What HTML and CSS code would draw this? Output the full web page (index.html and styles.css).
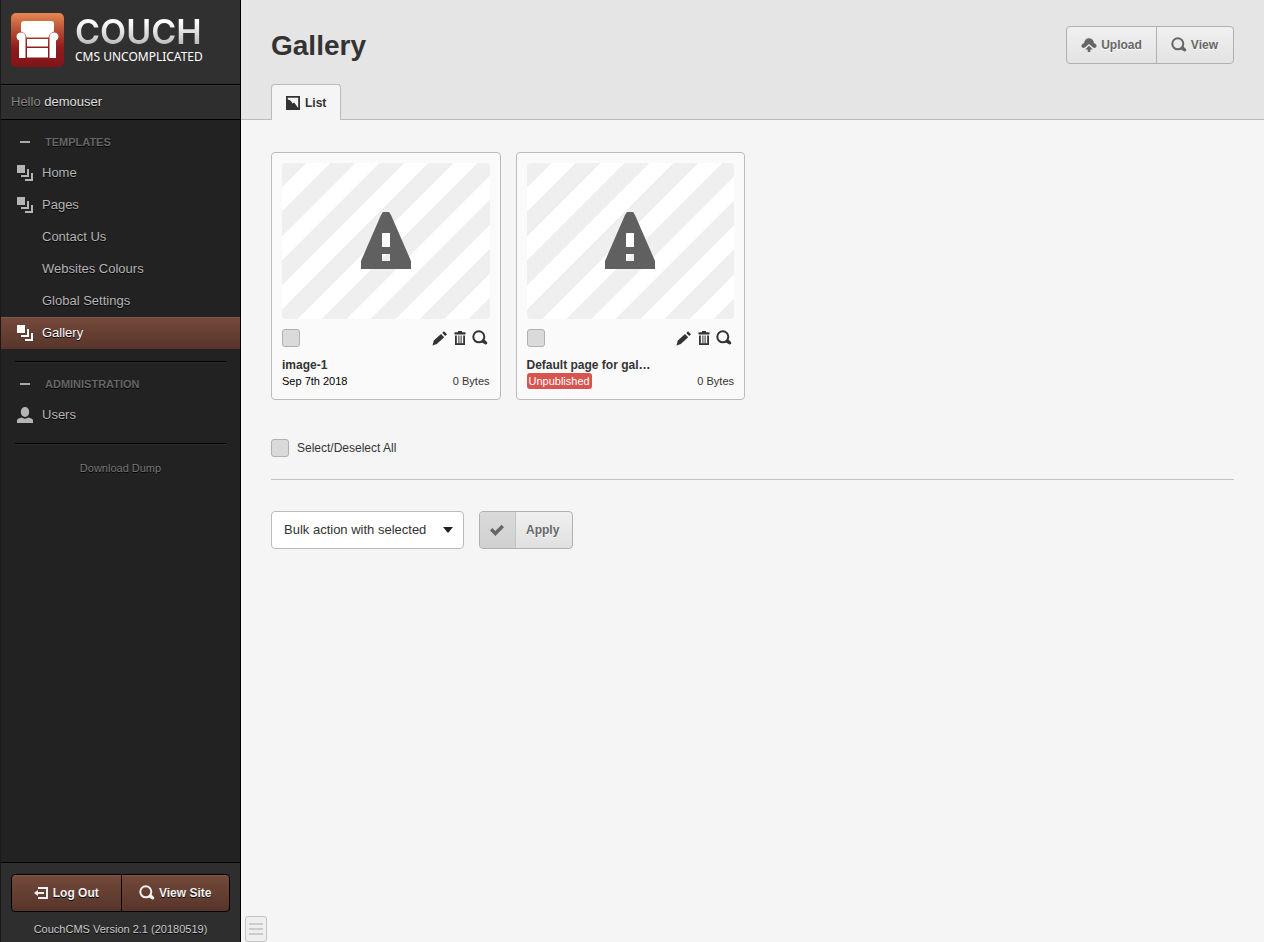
FILE: index.html
```html
<!DOCTYPE html>
<html lang="en">
<head>
<meta charset="utf-8">
<title>Gallery - CouchCMS</title>
<meta name="viewport" content="width=device-width, initial-scale=1">
<link rel="stylesheet" href="styles.css">
</head>
<body>
<svg class="defs" aria-hidden="true">
  <symbol id="stack" viewBox="0 0 16 16"><path d="M0 0h8v8H0zM10 4h2v8H4v-2h6zM14 8h2v8H8v-2h6z"/></symbol>
  <symbol id="search" viewBox="0 0 16 16"><circle cx="6.800" cy="6.800" r="5.500" fill="none" stroke="currentColor" stroke-width="2"/><path d="M9 12l3-3 2.700 2.700c.9.9.7 1.700.2 2.200s-1.400.8-2.300 0z"/></symbol>
  <symbol id="pencil" viewBox="0 0 16 16"><path d="M.5 15.500l1.300-5L9 4l3.200 3.200-7.400 6.900zM10.300 2.900L12 1.200l3 3-1.800 1.700z"/></symbol>
  <symbol id="trash" viewBox="0 0 14 16"><path d="M5 1h4v1.200h3.500V4.500h-11V2.200H5zM2 5.500h1.800v7.700h1.600V5.500h1v7.700h1.200V5.500h1v7.700h1.600V5.500H12V15H2z"/></symbol>
  <symbol id="user" viewBox="0 0 16 16"><ellipse cx="8" cy="5" rx="4.200" ry="5"/><path d="M0 16v-2.700c.3-1.700 2.500-2.300 4.800-2.800 1.600 1.500 4.800 1.500 6.400 0 2.300.5 4.500 1.100 4.800 2.800V16z"/></symbol>
</svg>
<div class="app">
  <aside class="sidebar">
    <a class="brand" href="#">
      <svg class="brand-mark" viewBox="0 0 53 54" aria-hidden="true">
        <defs><linearGradient id="mark" x1="0" y1="0" x2="0" y2="1"><stop offset="0" stop-color="#e58a51"/><stop offset=".3" stop-color="#bb5136"/><stop offset=".65" stop-color="#8e1b1c"/><stop offset="1" stop-color="#821419"/></linearGradient></defs>
        <rect width="53" height="54" rx="5" fill="url(#mark)"/>
        <g fill="#fff">
          <path d="M13 8h27q3 0 3 3v7.500q-5 1.500-5.500 6H15.500q-.5-4.500-5.500-6V11q0-3 3-3z"/>
          <path d="M5.500 23.500c0-5.500 9-5.500 9 0V45H8V27.500q-2.500-1-2.500-4zM47.500 23.500c0-5.500-9-5.500-9 0V45H45V27.500q2.500-1 2.500-4z"/>
          <path d="M16 26h21v7.500H16zM16 35h21v9.500H16z"/>
        </g>
      </svg>
      <span class="brand-text"><span class="brand-name">COUCH</span><span class="brand-tag">CMS UNCOMPLICATED</span></span>
    </a>
    <div class="hello">Hello <a href="#">demouser</a></div>
    <nav class="nav">
      <h2><button type="button" aria-expanded="true"><i class="dash"></i>TEMPLATES</button></h2>
      <ul>
        <li><a href="#"><svg class="icon"><use href="#stack"/></svg>Home</a></li>
        <li><a href="#"><svg class="icon"><use href="#stack"/></svg>Pages</a></li>
        <li><a href="#" class="child">Contact Us</a></li>
        <li><a href="#" class="child">Websites Colours</a></li>
        <li><a href="#" class="child">Global Settings</a></li>
        <li><a href="#" class="active" aria-current="page"><svg class="icon"><use href="#stack"/></svg>Gallery</a></li>
      </ul>
      <hr>
      <h2><button type="button" aria-expanded="true"><i class="dash"></i>ADMINISTRATION</button></h2>
      <ul>
        <li><a href="#"><svg class="icon"><use href="#user"/></svg>Users</a></li>
      </ul>
      <hr>
      <a class="dump" href="#">Download Dump</a>
    </nav>
    <footer class="side-foot">
      <div class="side-buttons">
        <a href="#"><svg class="icon small" viewBox="0 0 14 14"><path d="M4 1h10v12H4v-2h8V3H4zM0 7l4-3v2h6v2H4v2z"/></svg>Log Out</a>
        <a href="#"><svg class="icon"><use href="#search"/></svg>View Site</a>
      </div>
      <p>CouchCMS Version 2.1 (20180519)</p>
    </footer>
  </aside>

  <main class="main">
    <header class="head">
      <div class="head-row">
        <h1>Gallery</h1>
        <div class="actions">
          <a href="#"><svg class="icon" viewBox="0 0 16 16"><path d="M1 10.300C-.3 8.800.9 6.500 3 6.200 3.500 3 5.500 1.300 8 1.300s4.500 1.700 5 4.900c2.100.3 3.300 2.600 2 4.100-.7.800-2 .9-2.900.2L8 7l-4.100 3.500c-.9.700-2.200.6-2.900-.2zM8 8.700l3.800 3.700H9.300V15H6.700v-2.600H4.200z"/></svg>Upload</a>
          <a href="#"><svg class="icon"><use href="#search"/></svg>View</a>
        </div>
      </div>
      <a class="tab" href="#"><svg class="icon small" viewBox="0 0 14 14"><path fill-rule="evenodd" d="M0 0h14v14H0zM1.800 1.800v1.700c2.400.2 3.700 1.800 4.700 3.900l1.700-.9 4 5.500V1.800z"/></svg>List</a>
    </header>

    <form class="content">
      <div class="cards">
        <article class="card">
          <div class="thumb"><svg viewBox="0 0 50 57" role="img" aria-label="No preview"><path fill="#606060" fill-rule="evenodd" d="M22 0h6l2 3 20 46v8H0v-8L20 3zM21 21v14h8V21zM21 42v7h8v-7z"/></svg></div>
          <div class="tools">
            <input type="checkbox" aria-label="Select image-1">
            <a href="#" aria-label="Edit"><svg class="icon"><use href="#pencil"/></svg></a>
            <a href="#" aria-label="Delete"><svg class="icon"><use href="#trash"/></svg></a>
            <a href="#" aria-label="View"><svg class="icon"><use href="#search"/></svg></a>
          </div>
          <h3><a href="#">image-1</a></h3>
          <div class="meta"><span class="date">Sep 7th 2018</span><span>0 Bytes</span></div>
        </article>
        <article class="card">
          <div class="thumb"><svg viewBox="0 0 50 57" role="img" aria-label="No preview"><path fill="#606060" fill-rule="evenodd" d="M22 0h6l2 3 20 46v8H0v-8L20 3zM21 21v14h8V21zM21 42v7h8v-7z"/></svg></div>
          <div class="tools">
            <input type="checkbox" aria-label="Select default page">
            <a href="#" aria-label="Edit"><svg class="icon"><use href="#pencil"/></svg></a>
            <a href="#" aria-label="Delete"><svg class="icon"><use href="#trash"/></svg></a>
            <a href="#" aria-label="View"><svg class="icon"><use href="#search"/></svg></a>
          </div>
          <h3><a href="#">Default page for gal…</a></h3>
          <div class="meta"><span class="badge">Unpublished</span><span>0 Bytes</span></div>
        </article>
      </div>
      <label class="select-all"><input type="checkbox">Select/Deselect All</label>
      <div class="bulk">
        <div class="select">
          <select aria-label="Bulk action"><option>Bulk action with selected</option></select>
          <svg viewBox="0 0 10 6" aria-hidden="true"><path d="M0 0h10L5 6z"/></svg>
        </div>
        <button class="apply" type="button"><span class="tick"><svg class="icon small" viewBox="0 0 14 14"><path d="M0 7.500L2.300 5l3 3L11.600 1.800 14 4.200 5.400 13z"/></svg></span><span class="apply-text">Apply</span></button>
      </div>
    </form>
    <button class="toggle" type="button" aria-label="Toggle sidebar"><i></i><i></i><i></i></button>
  </main>
</div>
</body>
</html>
```

FILE: styles.css
```css
* { box-sizing: border-box; }

body {
  margin: 0;
  background: #fff;
  color: #333;
  font: 13px/16px "Liberation Sans", Arial, sans-serif;
}

a { color: inherit; text-decoration: none; }
button, select { font: inherit; color: inherit; }
h1, h2, h3, p, ul { margin: 0; padding: 0; }
ul { list-style: none; }

.defs { display: none; }
.icon { width: 16px; height: 16px; fill: currentColor; flex: none; }
.icon.small { width: 14px; height: 14px; }

.app {
  display: grid;
  grid-template-columns: 241px 1fr;
  min-height: 100vh;
  padding-right: 2px;
}

/* Sidebar */
.sidebar {
  display: flex;
  flex-direction: column;
  background: #222;
  border-left: 1px solid #1a1a1a;
  border-right: 1px solid #000;
  color: #b5b5b5;
  text-shadow: 0 1px 0 #000;
}

.brand {
  display: flex;
  gap: 11px;
  height: 85px;
  padding: 13px 10px;
  background: #303030;
  border-bottom: 1px solid #000;
}
.brand-mark { width: 53px; height: 54px; }
.brand-text { display: flex; flex-direction: column; padding-top: 1px; text-shadow: none; }
.brand-name {
  font: 600 34px/36px Inter, sans-serif;
  color: transparent;
  background: linear-gradient(#fff 20%, #bbb 85%);
  -webkit-background-clip: text;
  background-clip: text;
}
.brand-tag { font: 12px/14px "Noto Sans", sans-serif; color: #fff; white-space: nowrap; }

.hello {
  padding: 8px 10px 9px;
  background: #2e2e2e;
  border-top: 1px solid #393939;
  border-bottom: 1px solid #000;
  color: #888;
}
.hello a { color: #e0e0e0; }

.nav { flex: 1; padding-top: 7px; }
.nav h2 { font-size: 11px; line-height: 30px; color: #666; }
.nav h2 button {
  display: flex;
  align-items: center;
  gap: 15px;
  width: 100%;
  padding: 0 19px;
  border: 0;
  background: none;
  text-shadow: inherit;
}
.dash { width: 10px; height: 2px; background: #aaa; }
.nav li a {
  display: flex;
  align-items: center;
  gap: 9px;
  height: 32px;
  padding: 0 16px;
}
.nav li .child { padding-left: 41px; }
.nav li .active {
  background: linear-gradient(#744a3b, #57342a);
  box-shadow: inset 0 1px #805848;
  color: #fff;
}
.nav hr {
  height: 2px;
  margin: 12px 14px 6px;
  border: 0;
  border-top: 1px solid #000;
  border-bottom: 1px solid #2b2b2b;
}
.dump { display: block; padding: 9px 0; font-size: 11px; text-align: center; color: #777; }

.side-foot {
  padding: 11px 10px 5px;
  background: #2e2e2e;
  border-top: 1px solid #000;
  font-size: 11px;
  text-align: center;
  color: #ccc;
}
.side-buttons {
  display: grid;
  grid-template-columns: 1fr 1fr;
  margin-bottom: 9px;
  border: 1px solid #000;
  border-radius: 4px;
  background: linear-gradient(#744a3b, #57342a);
  box-shadow: inset 0 1px #805848;
  font-size: 12px;
  font-weight: bold;
  color: #f2f2f2;
}
.side-buttons a { display: flex; align-items: center; justify-content: center; gap: 5px; height: 36px; }
.side-buttons a + a { border-left: 1px solid #000; gap: 4px; }

/* Main column */
.main { position: relative; background: #f5f5f5; min-width: 0; }
.head {
  display: flex;
  flex-direction: column;
  height: 120px;
  padding: 26px 30px 0;
  background: #e5e5e5;
  border-bottom: 1px solid #bbb;
}
.head-row { display: flex; justify-content: space-between; height: 58px; }
h1 { font-size: 28px; line-height: 40px; }

.actions {
  display: flex;
  height: 38px;
  border: 1px solid #b0b0b0;
  border-radius: 4px;
  background: linear-gradient(#f0f0f0, #e3e3e3);
  font-size: 12px;
  font-weight: bold;
  color: #666;
  text-shadow: 0 1px 0 #fff;
}
.actions a { display: flex; align-items: center; gap: 4px; padding: 0 14px; }
.actions a + a { border-left: 1px solid #b0b0b0; padding-right: 15px; }

/* The tab covers the header's bottom border */
.tab {
  display: flex;
  align-self: flex-start;
  align-items: center;
  gap: 5px;
  height: 36px;
  flex: none;
  margin-bottom: -1px;
  padding: 0 14px;
  border: 1px solid #bbb;
  border-bottom: 0;
  border-radius: 4px 4px 0 0;
  background: #f5f5f5;
  font-size: 12px;
  font-weight: bold;
}

.content { padding: 32px 30px; }
.cards { display: grid; grid-template-columns: repeat(auto-fill, minmax(220px, 1fr)); gap: 15px; }
.card {
  padding: 10px;
  border: 1px solid #bbb;
  border-radius: 4px;
  background: #fafafa;
}
.thumb {
  display: flex;
  align-items: center;
  justify-content: center;
  aspect-ratio: 4 / 3;
  border-radius: 4px;
  background: linear-gradient(135deg, #efefef 25%, #fff 25% 50%, #efefef 50% 75%, #fff 75%) 0 0 / 49px 49px;
}
.thumb svg { width: 50px; height: 57px; }
.tools { display: flex; align-items: center; gap: 4px; padding: 10px 2px 10px 0; }
.tools a { display: flex; }

input[type="checkbox"] {
  appearance: none;
  width: 18px;
  height: 18px;
  margin: 0;
  border: 1px solid #b0b0b0;
  border-radius: 3px;
  background: #dadada;
}
input[type="checkbox"]:checked { background: #666; }
.tools input { margin-right: auto; }

.card h3 { font-size: 12px; line-height: 16px; }
.meta { display: flex; justify-content: space-between; font-size: 11px; }
.date { color: #000; }
.badge { padding: 0 2px; border-radius: 3px; background: #d9534f; color: #fff; }

.select-all {
  display: flex;
  align-items: center;
  gap: 8px;
  padding: 39px 0 22px;
  border-bottom: 1px solid #c4c4c4;
  font-size: 12px;
}

.bulk { display: flex; gap: 15px; padding-top: 31px; }
.select { display: grid; align-items: center; }
.select select, .select svg { grid-area: 1 / 1; }
.select select {
  appearance: none;
  height: 38px;
  padding: 0 36px 0 12px;
  border: 1px solid #bbb;
  border-radius: 4px;
  background: #fff;
}
.select svg { justify-self: end; width: 10px; height: 6px; margin-right: 11px; fill: #222; pointer-events: none; }

.apply {
  display: flex;
  height: 38px;
  padding: 0;
  border: 1px solid #b0b0b0;
  border-radius: 4px;
  overflow: hidden;
  background: linear-gradient(#f0f0f0, #e0e0e0);
  font-size: 12px;
  font-weight: bold;
  color: #666;
  text-shadow: 0 1px 0 #fff;
}
.tick, .apply-text { display: flex; align-items: center; height: 100%; }
.tick { padding: 0 11px 0 10px; border-right: 1px solid #c4c4c4; background: linear-gradient(#dadada, #d0d0d0); }
.apply-text { padding: 0 13px 0 10px; }

.toggle {
  position: absolute;
  left: 4px;
  bottom: 0;
  display: flex;
  flex-direction: column;
  align-items: center;
  justify-content: center;
  gap: 3px;
  width: 22px;
  height: 26px;
  padding: 0;
  border: 1px solid #c4c4c4;
  border-radius: 3px;
  background: #eee;
}
.toggle i { width: 14px; height: 2px; background: #ccc; }
```
